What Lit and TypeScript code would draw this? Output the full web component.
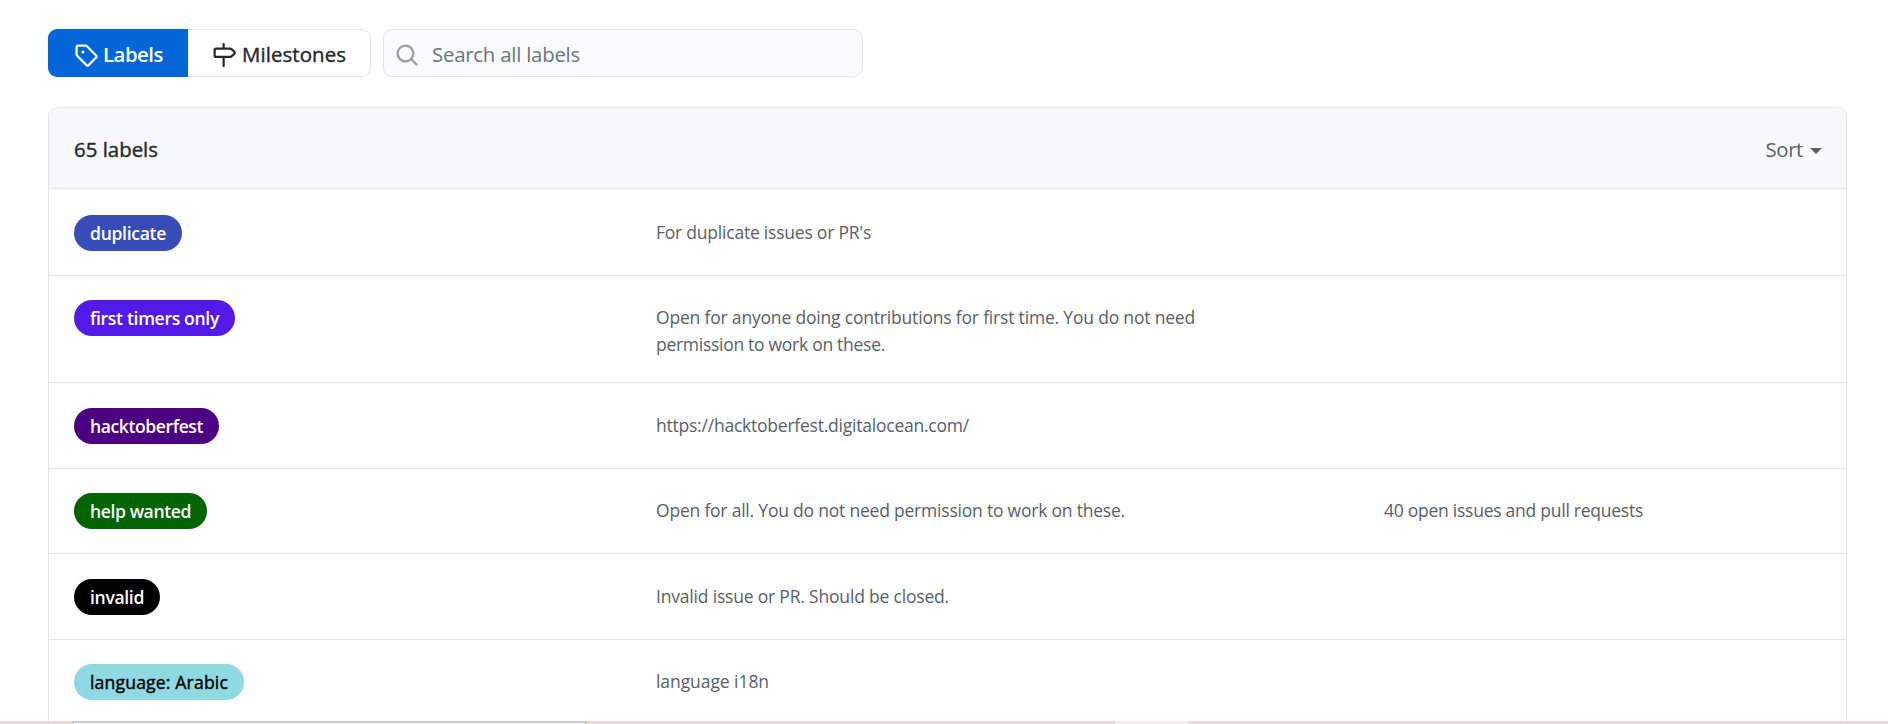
import { LitElement, html, css, svg } from "lit";
import { customElement, property } from "lit/decorators.js";

/** Single-line text whose tracking is adjusted to fill a given advance width. */
@customElement("fit-text")
class FitText extends LitElement {
  static styles = css`
    :host { display: inline-block; white-space: nowrap; }
  `;
  @property() text = "";
  @property({ type: Number }) width = 0;

  firstUpdated() {
    const span = this.renderRoot.querySelector("span")!;
    const natural = span.getBoundingClientRect().width;
    span.style.letterSpacing = `${(this.width - natural) / this.text.length}px`;
  }
  render() {
    return html`<span>${this.text}</span>`;
  }
}

interface Label {
  name: string;
  nameWidth: number;
  badge: number;
  bg: string;
  fg?: string;
  height: number;
  top: number;
  desc: [string, number][];
  count?: [string, number];
}

const LABELS: Label[] = [
  { name: "duplicate", nameWidth: 76, badge: 108, bg: "#384cb8", height: 87, top: 26, desc: [["For duplicate issues or PR's", 215]] },
  { name: "first timers only", nameWidth: 129, badge: 161, bg: "#5319e7", height: 107, top: 24, desc: [["Open for anyone doing contributions for first time. You do not need", 539], ["permission to work on these.", 229]] },
  { name: "hacktoberfest", nameWidth: 113, badge: 145, bg: "#4b0082", height: 86, top: 25, desc: [["https://hacktoberfest.digitalocean.com/", 313]] },
  { name: "help wanted", nameWidth: 101, badge: 133, bg: "#006400", height: 85, top: 24, desc: [["Open for all. You do not need permission to work on these.", 469]], count: ["40 open issues and pull requests", 259] },
  { name: "invalid", nameWidth: 54, badge: 86, bg: "#000000", height: 86, top: 25, desc: [["Invalid issue or PR. Should be closed.", 293]] },
  { name: "language: Arabic", nameWidth: 138, badge: 170, bg: "#8fd9e2", fg: "#000", height: 86, top: 24, desc: [["language i18n", 113]] },
];

const ICONS = {
  tag: svg`<path d="M1 7.775V2.75C1 1.784 1.784 1 2.75 1h5.025c.464 0 .91.184 1.238.513l6.25 6.25a1.75 1.75 0 0 1 0 2.474l-5.026 5.026a1.75 1.75 0 0 1-2.474 0l-6.25-6.25A1.752 1.752 0 0 1 1 7.775Zm1.5 0c0 .066.026.13.073.177l6.25 6.25a.25.25 0 0 0 .354 0l5.025-5.025a.25.25 0 0 0 0-.354l-6.25-6.25a.25.25 0 0 0-.177-.073H2.75a.25.25 0 0 0-.25.25ZM6 5a1 1 0 1 1 0 2 1 1 0 0 1 0-2Z"/>`,
  milestone: svg`<path d="M7.75 0a.75.75 0 0 1 .75.75V3h3.634c.414 0 .814.147 1.13.414l2.07 1.75a1.75 1.75 0 0 1 0 2.672l-2.07 1.75a1.75 1.75 0 0 1-1.13.414H8.5v5.25a.75.75 0 0 1-1.5 0V10H2.75A1.75 1.75 0 0 1 1 8.25v-3.5C1 3.784 1.784 3 2.75 3H7V.75A.75.75 0 0 1 7.75 0Zm4.384 8.5a.25.25 0 0 0 .161-.06l2.07-1.75a.248.248 0 0 0 0-.38l-2.07-1.75a.25.25 0 0 0-.161-.06H2.75a.25.25 0 0 0-.25.25v3.5c0 .138.112.25.25.25h9.384Z"/>`,
  search: svg`<path d="M10.68 11.74a6 6 0 0 1-7.922-8.982 6 6 0 0 1 8.982 7.922l3.04 3.04a.749.749 0 0 1-.326 1.275.749.749 0 0 1-.734-.215ZM11.5 7a4.499 4.499 0 1 0-8.997 0A4.499 4.499 0 0 0 11.5 7Z"/>`,
};

const icon = (name: keyof typeof ICONS) =>
  html`<svg class="icon" viewBox="0 0 16 16" width="24" height="24">${ICONS[name]}</svg>`;

const fit = (text: string, width: number) => html`<fit-text .text=${text} .width=${width}></fit-text>`;

@customElement("app-root")
class AppRoot extends LitElement {
  static styles = css`
    :host {
      display: flex; flex-direction: column; box-sizing: border-box;
      height: 724px; overflow: hidden; background: #fff; color: #24292e;
      font: 20.4px/30px "Open Sans", "Noto Sans", sans-serif; font-stretch: 94%;
    }
    * { box-sizing: border-box; }
    .icon { fill: currentColor; flex: none; display: block; margin-top: 3px; }
    .toolbar { display: flex; padding: 29px 0 0 48px; height: 107px; flex: none; align-items: flex-start; }
    .toolbar fit-text { padding-top: 2px; }
    .tab { display: flex; height: 48px; align-items: center; gap: 5px; }
    .tab.on { width: 140px; background: #0366d6; color: #fff; border-radius: 9px 0 0 9px; padding-left: 26px; font-weight: 600; }
    .tab.off { width: 183px; border: 1px solid #e1e4e8; border-left: 0; border-radius: 0 9px 9px 0; padding-left: 24px; gap: 6px; }
    .medium { -webkit-text-stroke: 0.4px currentColor; }
    .search { margin-left: 12px; width: 480px; height: 48px; display: flex; align-items: center; gap: 13px;
      padding-left: 11px; border: 1px solid #e1e4e8; border-radius: 9px; background: #fafbfc; color: #6a737d; }
    .search .icon { color: #959da5; }
    .box { flex: 1; min-height: 0; overflow: hidden; margin: 0 41px 0 48px; border: 1px solid #e1e4e8; border-bottom: 0; border-radius: 9px 9px 0 0; }
    .head { height: 81px; display: flex; justify-content: space-between; align-items: center; padding: 2px 24px 0 25px;
      background: #f6f8fa; border-bottom: 1px solid #e1e4e8; }
    .sort { display: flex; align-items: center; gap: 7px; color: #586069; }
    .caret { border: 6px solid transparent; border-top-color: currentColor; border-bottom: 0; margin-top: 4px; }
    .row { display: grid; grid-template-columns: 582px 728px 1fr; align-items: start; padding: 0 0 0 25px; border-bottom: 1px solid #e1e4e8; }
    .badge { display: flex; justify-content: center; align-items: center; height: 36px; border-radius: 18px;
      font-weight: 600; font-size: 17.6px; line-height: 36px; }
    .badge.medium { font-weight: 400; }
    .text { font-size: 17.5px; line-height: 27px; color: #586069; padding-top: 4px; display: flex; flex-direction: column; align-items: flex-start; }
    .strip { height: 3px; flex: none; display: grid; grid-template-columns: 72px 515px 528px 73px 1fr; background: #e8d9d8; }
    .field { background: #fff; border: 2px solid #cbcbcb; border-bottom: 0; }
    .pale { background: #f6eeed; }
  `;

  render() {
    return html`
      <div class="toolbar">
        <div class="tab on">${icon("tag")}${fit("Labels", 60)}</div>
        <div class="tab off medium">${icon("milestone")}${fit("Milestones", 104)}</div>
        <div class="search">${icon("search")}${fit("Search all labels", 148)}</div>
      </div>
      <div class="box">
        <div class="head">
          <div class="medium">${fit("65 labels", 84)}</div>
          <div class="sort">${fit("Sort", 37.5)}<span class="caret"></span></div>
        </div>
        ${LABELS.map((l) => html`
          <div class="row" style="height:${l.height}px;padding-top:${l.top}px">
            <div class="badge ${l.fg ? "medium" : ""}" style="width:${l.badge}px;background:${l.bg};color:${l.fg ?? "#fff"}">${fit(l.name, l.nameWidth)}</div>
            <div class="text">${l.desc.map(([t, w]) => fit(t, w))}</div>
            <div class="text">${l.count ? fit(...l.count) : ""}</div>
          </div>`)}
      </div>
      <div class="strip"><i></i><i class="field"></i><i></i><i class="pale"></i><i></i></div>
    `;
  }
}
